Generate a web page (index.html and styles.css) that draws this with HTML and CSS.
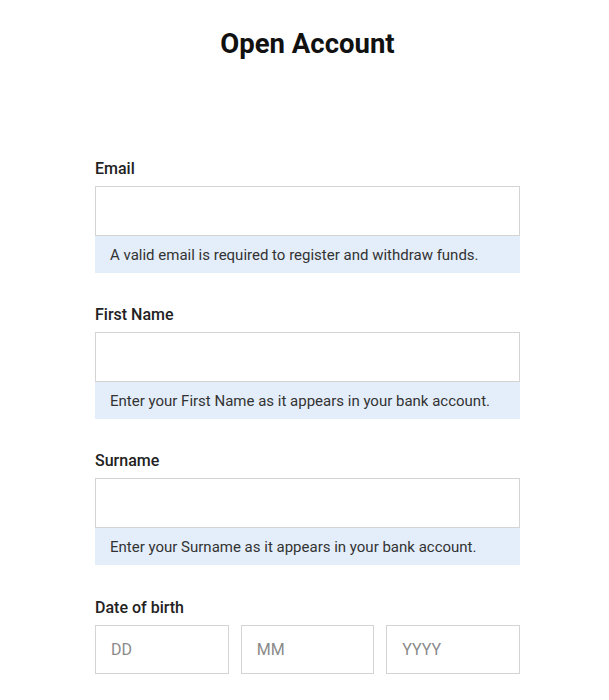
FILE: index.html
```html
<!DOCTYPE html>
<html>
<head>
<meta charset="utf-8">
<link rel="stylesheet" href="styles.css">
</head>
<body>
<div class="page">
  <h1 class="title">Open Account</h1>
  <form class="form">
    <div class="field">
      <label class="label">Email</label>
      <input class="input" type="text">
      <div class="hint">A valid email is required to register and withdraw funds.</div>
    </div>
    <div class="field">
      <label class="label">First Name</label>
      <input class="input" type="text">
      <div class="hint">Enter your First Name as it appears in your bank account.</div>
    </div>
    <div class="field">
      <label class="label">Surname</label>
      <input class="input" type="text">
      <div class="hint">Enter your Surname as it appears in your bank account.</div>
    </div>
    <div class="field field-dob">
      <label class="label">Date of birth</label>
      <div class="dob">
        <input class="input" type="text" placeholder="DD">
        <input class="input" type="text" placeholder="MM">
        <input class="input" type="text" placeholder="YYYY">
      </div>
    </div>
  </form>
</div>
</body>
</html>
```

FILE: styles.css
```css
* { box-sizing: border-box; }
html, body { margin: 0; padding: 0; background: #fff; }
body { font-family: Roboto, "Noto Sans", sans-serif; color: #1a1a1a; }
.page { padding: 29px 89px 0 95px; }
.title {
  margin: 0;
  text-align: center;
  font-size: 27.5px;
  line-height: 30px;
  font-weight: 700;
  color: #111;
}
.form { margin-top: 99px; display: flex; flex-direction: column; gap: 31px; }
.field { display: flex; flex-direction: column; }
.field-dob { margin-top: 1px; }
.label {
  font-size: 16px;
  line-height: 20px;
  font-weight: 500;
  color: #222;
  padding-top: 1px;
  margin-bottom: 7px;
}
.input {
  display: block;
  width: 100%;
  height: 50px;
  border: 1px solid #d4d4d4;
  border-radius: 0;
  background: #fff;
  padding: 0 15px;
  font-family: Roboto, sans-serif;
  font-size: 16px;
  color: #333;
  outline: none;
}
.input::placeholder { color: #8a8a8a; }
.hint {
  background: #e3eefa;
  height: 37px;
  padding: 1px 15px 0;
  display: flex;
  align-items: center;
  font-size: 15px;
  color: #333;
}
.dob { display: grid; grid-template-columns: 1fr 1fr 1fr; gap: 12px; }
.dob .input { height: 49px; }
```
